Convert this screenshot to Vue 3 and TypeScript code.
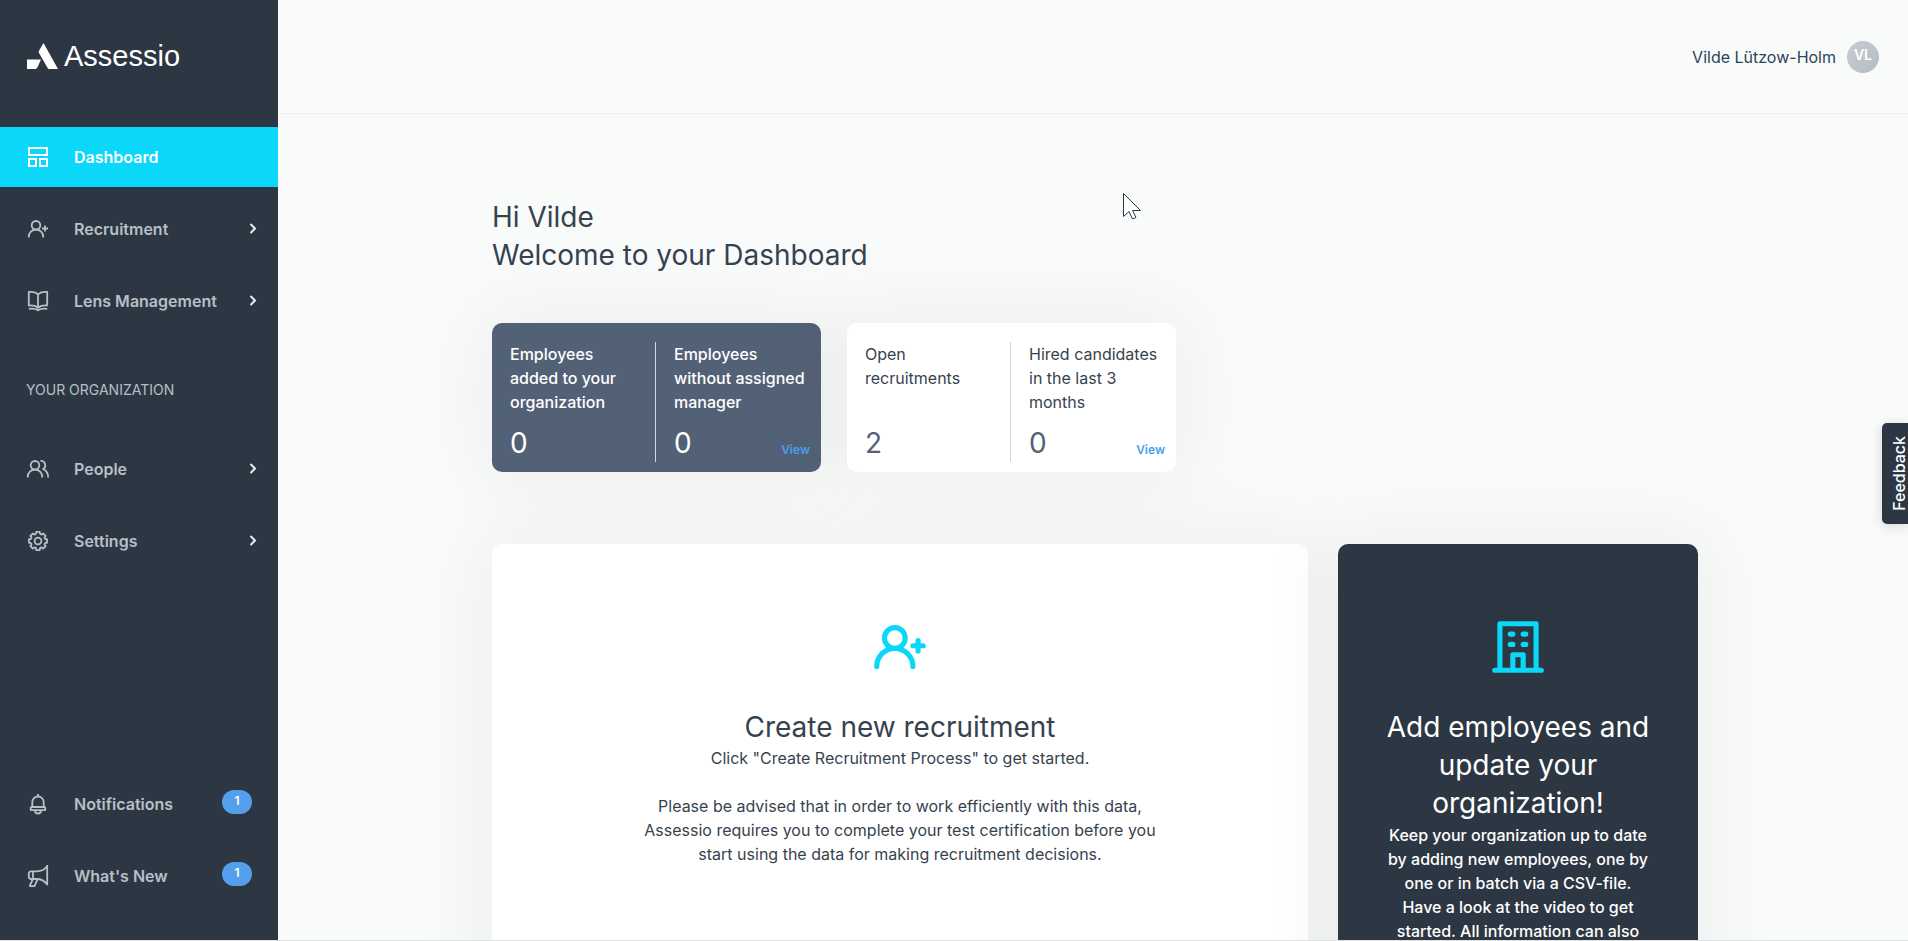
<script setup lang="ts">
interface NavItem {
  label: string
  icon: string
  active?: boolean
  expandable?: boolean
  badge?: number
}

interface Stat {
  label: string
  value: number
  link?: boolean
}

const mainNav: NavItem[] = [
  { label: 'Dashboard', icon: 'grid', active: true },
  { label: 'Recruitment', icon: 'user-plus', expandable: true },
  { label: 'Lens Management', icon: 'book', expandable: true },
]

const orgNav: NavItem[] = [
  { label: 'People', icon: 'people', expandable: true },
  { label: 'Settings', icon: 'gear', expandable: true },
]

const footNav: NavItem[] = [
  { label: 'Notifications', icon: 'bell', badge: 1 },
  { label: "What's New", icon: 'megaphone', badge: 1 },
]

const navGroups = [
  { name: 'main', title: '', items: mainNav },
  { name: 'org', title: 'Your organization', items: orgNav },
  { name: 'foot', title: '', items: footNav },
]

const statCards: { tone: string; stats: Stat[] }[] = [
  {
    tone: 'slate',
    stats: [
      { label: 'Employees added to your organization', value: 0 },
      { label: 'Employees without assigned manager', value: 0, link: true },
    ],
  },
  {
    tone: 'white',
    stats: [
      { label: 'Open recruitments', value: 2 },
      { label: 'Hired candidates in the last 3 months', value: 0, link: true },
    ],
  },
]

// Eight rounded teeth around a centre of 12,12
const gearPath = Array.from({ length: 8 }, (_, k) => {
  const point = (deg: number, r: number) => {
    const a = ((k * 45 + deg) * Math.PI) / 180
    return `${(12 + r * Math.sin(a)).toFixed(2)} ${(12 - r * Math.cos(a)).toFixed(2)}`
  }
  return `${k ? 'L' : 'M'}${point(-11, 9.2)}L${point(11, 9.2)}L${point(15, 7.6)}Q${point(22.5, 6.8)} ${point(30, 7.6)}`
}).join('') + 'Z'

const iconPaths: Record<string, string[]> = {
  grid: ['M3 3h18v7H3z', 'M3 14h7v7H3z', 'M14 14h7v7h-7z'],
  'user-plus': [
    'M10 4a4.3 4.3 0 1 1 0 8.6a4.3 4.3 0 1 1 0-8.6z',
    'M2.8 20.5v-1a7.2 7 0 0 1 14.4 0v1',
    'M19 8.5v6M16 11.5h6',
  ],
  book: [
    'M12 5.2C9.5 3.2 6 2.700 2.800 3v13.500c3.200-.3 6.700.2 9.200 2.200c2.500-2 6-2.500 9.200-2.200V3C18 2.700 14.500 3.200 12 5.200z',
    'M12 5.200v13.200',
    'M2.800 19.800c3.200-.3 6.700-.2 9.200 1.500c2.500-1.700 6-1.800 9.200-1.500',
  ],
  people: [
    'M9 4a4.3 4.3 0 1 1 0 8.6a4.3 4.3 0 1 1 0-8.6z',
    'M1.800 20.500v-1a7.200 7 0 0 1 14.400 0v1',
    'M14.500 4a4.300 4.300 0 0 1 2.600 8c2.800 1.200 5.100 4 5.100 8.500',
  ],
  gear: [gearPath, 'M12 8.600a3.400 3.400 0 1 1 0 6.800a3.400 3.400 0 1 1 0-6.800z'],
  bell: [
    'M12 4.500V2',
    'M6.300 15v-4.800a5.700 5.700 0 0 1 11.400 0V15',
    'M5.600 15h12.800a.9.900 0 0 1 .9.900v2.200H4.700v-2.200a.9.900 0 0 1 .9-.9z',
    'M9 18.500a3 3 0 0 0 6 0',
  ],
  megaphone: [
    'M21.200 1v19.500c-3-4-6.500-5.500-10.500-5.500H5a2.200 2.200 0 0 1-2.200-2.200V9.500A2.200 2.200 0 0 1 5 7.300h5.700c4 0 8-1.300 10.500-5.300',
    'M7 7.500v7.300',
    'M7 15l-3 6.200v1h4.500l3-6.800',
  ],
}
</script>

<template>
  <div class="app">
    <aside class="sidebar">
      <a class="logo" href="#" aria-label="Assessio">
        <svg width="31" height="26" viewBox="0 0 31 26" aria-hidden="true">
          <path d="M16.500 0 31 26h-8.500c-1 0-1.600-.4-2-1.200L12 10c-.4-.8-.4-1.500 0-2.300z" />
          <path d="M0 16.500h14l-3.500 7.800c-.5 1.200-1.200 1.700-2.500 1.700H0z" />
        </svg>
        <span>Assessio</span>
      </a>

      <nav v-for="group in navGroups" :key="group.name" :class="['nav', `nav-${group.name}`]">
        <h2 v-if="group.title" class="nav-title">{{ group.title }}</h2>
        <a
          v-for="item in group.items"
          :key="item.label"
          href="#"
          :class="['nav-item', { active: item.active }]"
        >
          <svg class="nav-icon" width="24" height="24" viewBox="0 0 24 24" aria-hidden="true">
            <path v-for="d in iconPaths[item.icon]" :key="d" :d="d" />
          </svg>
          <span class="nav-label">{{ item.label }}</span>
          <svg v-if="item.expandable" class="chevron" width="8" height="12" viewBox="0 0 8 12" aria-hidden="true">
            <path d="M1.500 1 6 5.500 1.500 10" />
          </svg>
          <span v-if="item.badge" class="badge">{{ item.badge }}</span>
        </a>
      </nav>
    </aside>

    <div class="page">
      <header class="topbar">
        <button class="user" type="button">
          <span>Vilde Lützow-Holm</span>
          <span class="avatar">VL</span>
        </button>
      </header>

      <main class="content">
        <h1 class="welcome">Hi Vilde<br />Welcome to your Dashboard</h1>

        <section class="stats">
          <article v-for="card in statCards" :key="card.tone" :class="['stat-card', card.tone]">
            <div v-for="stat in card.stats" :key="stat.label" class="stat">
              <p>{{ stat.label }}</p>
              <div class="stat-foot">
                <strong>{{ stat.value }}</strong>
                <a v-if="stat.link" href="#">View</a>
              </div>
            </div>
          </article>
        </section>

        <section class="panels">
          <article class="panel recruit">
            <svg width="62" height="62" viewBox="0 0 24 24" aria-hidden="true">
              <path d="M21,10.5H20v-1a1,1,0,0,0-2,0v1H17a1,1,0,0,0,0,2h1v1a1,1,0,0,0,2,0v-1h1a1,1,0,0,0,0-2Zm-7.700,1.720A4.920,4.920,0,0,0,15,8.500a5,5,0,0,0-10,0,4.920,4.920,0,0,0,1.700,3.720A8,8,0,0,0,2,19.500a1,1,0,0,0,2,0,6,6,0,0,1,12,0,1,1,0,0,0,2,0A8,8,0,0,0,13.300,12.220ZM10,11.500a3,3,0,1,1,3-3A3,3,0,0,1,10,11.500Z" />
            </svg>
            <h2>Create new recruitment</h2>
            <p>Click "Create Recruitment Process" to get started.</p>
            <p class="note">
              Please be advised that in order to work efficiently with this data, Assessio requires you to
              complete your test certification before you start using the data for making recruitment decisions.
            </p>
          </article>

          <article class="panel employees">
            <svg width="62" height="62" viewBox="0 0 24 24" aria-hidden="true">
              <path d="M14,8h1a1,1,0,0,0,0-2H14a1,1,0,0,0,0,2Zm0,4h1a1,1,0,0,0,0-2H14a1,1,0,0,0,0,2ZM9,8h1a1,1,0,0,0,0-2H9A1,1,0,0,0,9,8Zm0,4h1a1,1,0,0,0,0-2H9a1,1,0,0,0,0,2Zm12,8H20V3a1,1,0,0,0-1-1H5A1,1,0,0,0,4,3V20H3a1,1,0,0,0,0,2H21a1,1,0,0,0,0-2Zm-8,0H11V16h2Zm5,0H15V15a1,1,0,0,0-1-1H10a1,1,0,0,0-1,1v5H6V4H18Z" />
            </svg>
            <h2>Add employees and update your organization!</h2>
            <p>
              Keep your organization up to date by adding new employees, one by one or in batch via a
              CSV-file. Have a look at the video to get started. All information can also
            </p>
          </article>
        </section>
      </main>
    </div>

    <button class="feedback" type="button">Feedback</button>

    <svg class="pointer" width="20" height="28" viewBox="0 0 20 28" aria-hidden="true">
      <path d="M1.500 1.500v23l5.500-5 3.500 7.500 3.500-1.500-3.500-7h8z" />
    </svg>
  </div>
</template>

<style>
body {
  margin: 0;
  overflow: hidden;
}
</style>

<style scoped>
.app {
  box-sizing: border-box;
  position: relative;
  display: flex;
  height: 100vh;
  overflow: hidden;
  border-bottom: 1px solid #dfe2e5;
  background: #f9fbfb;
  color: #36434f;
  font-family: Inter, "Noto Sans", sans-serif;
  font-size: 16px;
  line-height: 24px;
}

h1,
h2,
p {
  margin: 0;
  font-weight: 400;
}

a {
  text-decoration: none;
}

button {
  border: 0;
  font: inherit;
  cursor: pointer;
}

.sidebar {
  z-index: 1;
  display: flex;
  flex: 0 0 278px;
  flex-direction: column;
  background: #2d3643;
}

.logo {
  display: flex;
  align-items: center;
  gap: 6px;
  height: 34px;
  margin: 39px 27px 54px;
  color: #fff;
  font: 29px/34px "Liberation Sans", Arial, sans-serif;
}

.logo svg {
  fill: #fff;
}

.nav {
  display: flex;
  flex-direction: column;
  gap: 12px;
}

.nav-org {
  margin-top: 47px;
}

.nav-foot {
  margin: auto 0 34px;
}

.nav-title {
  margin: 0 26px 25px;
  color: #b6c0c6;
  font-size: 14px;
  line-height: 24px;
  text-transform: uppercase;
}

.nav-item {
  display: flex;
  align-items: center;
  height: 60px;
  padding: 0 21px 0 26px;
  color: #b6c0c6;
  font-weight: 600;
}

.nav-item.active {
  background: #0bd8f8;
  color: #fff;
}

.nav-icon {
  margin-right: 24px;
  fill: none;
  stroke: currentColor;
  stroke-width: 1.8;
  stroke-linejoin: round;
}

.active .nav-icon {
  stroke-width: 2;
  stroke-linejoin: miter;
}

.nav-label {
  flex: 1;
}

.chevron {
  fill: none;
  stroke: #e9edef;
  stroke-width: 2;
}

.badge {
  width: 30px;
  height: 24px;
  margin: 0 5px 4px 0;
  border-radius: 12px;
  background: #549fec;
  color: #fff;
  font-size: 12px;
  line-height: 22px;
  text-align: center;
}

.page {
  flex: 1;
  min-width: 0;
}

.topbar {
  box-sizing: border-box;
  display: flex;
  align-items: center;
  justify-content: flex-end;
  height: 114px;
  padding: 0 29px;
  border-bottom: 1px solid #eff1f1;
}

.user {
  display: flex;
  align-items: center;
  gap: 11px;
  padding: 0;
  background: none;
  color: #2b4458;
}

.avatar {
  width: 32px;
  height: 32px;
  border-radius: 50%;
  background: linear-gradient(135deg, #c9cccf, #b4bcc5);
  color: #fff;
  font-size: 14px;
  font-weight: 600;
  line-height: 28px;
}

.content {
  padding: 84px 210px 0 214px;
}

.welcome,
.panel h2 {
  font-size: 28px;
  line-height: 38px;
}

.stats {
  display: flex;
  gap: 26px;
  margin: 49px 0 72px;
}

.stat-card {
  display: grid;
  grid-template-columns: 163px 1fr;
  box-sizing: border-box;
  width: 329px;
  padding: 19px 0 10px;
  border-radius: 10px;
  box-shadow: 0 0 80px 10px rgba(0, 0, 0, 0.05);
}

.stat-card.slate {
  background: #536176;
  color: #fff;
}

.stat-card.slate p {
  font-weight: 500;
}

.stat-card.white {
  background: #fff;
}

.stat {
  display: flex;
  flex-direction: column;
  justify-content: space-between;
  height: 120px;
  padding: 0 16px 0 18px;
}

.stat + .stat {
  padding-right: 11px;
  border-left: 1px solid #d5d9dd;
}

.stat-foot {
  display: flex;
  align-items: flex-end;
  justify-content: space-between;
}

.stat-foot strong {
  font-size: 28px;
  font-weight: 400;
  line-height: 38px;
}

.white strong {
  color: #536176;
}

.stat-foot a {
  color: #4b9fea;
  font-size: 12px;
  font-weight: 600;
}

.panels {
  display: grid;
  grid-template-columns: minmax(0, 1fr) 360px;
  gap: 30px;
}

.panel {
  min-height: 480px;
  padding: 72px 46px;
  border-radius: 10px;
  box-shadow: 0 0 80px 10px rgba(0, 0, 0, 0.05);
  text-align: center;
}

.panel svg {
  display: block;
  margin: 0 auto 30px;
  fill: #0bd8f8;
}

.recruit {
  padding: 72px 140px;
  background: #fff;
}

.recruit .note {
  margin-top: 24px;
}

.employees {
  background: #2d3643;
  color: #fff;
}

.employees p {
  margin-top: 1px;
  font-weight: 500;
}

.feedback {
  position: absolute;
  top: 423px;
  right: 0;
  width: 26px;
  height: 101px;
  padding: 0;
  border-radius: 5px 0 0 5px;
  background: #2d3643;
  box-shadow: 0 2px 12px rgba(0, 0, 0, 0.15);
  color: #fff;
  font-weight: 500;
  line-height: 34px;
  writing-mode: sideways-lr;
}

.pointer {
  position: absolute;
  top: 192px;
  left: 1122px;
  fill: #fff;
  stroke: #2d3643;
}
</style>
